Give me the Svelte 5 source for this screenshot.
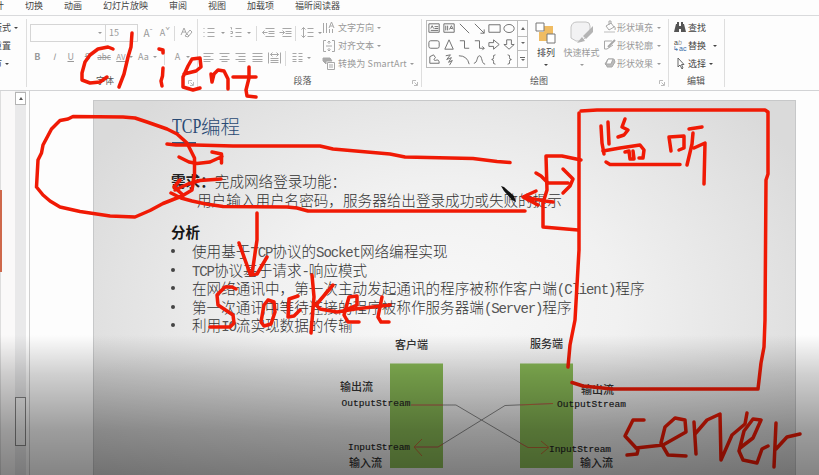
<script>
  const tabs = ['切换', '动画', '幻灯片放映', '审阅', '视图', '加载项', '福昕阅读器'];

  const points = [
    [['c', '使用基于'], ['l', 'TCP'], ['c', '协议的'], ['l', 'Socket'], ['c', '网络编程实现']],
    [['l', 'TCP'], ['c', '协议基于请求'], ['l', '-'], ['c', '响应模式']],
    [['c', '在网络通讯中，第一次主动发起通讯的程序被称作客户端'], ['l', '(Client)'], ['c', '程序']],
    [['c', '第一次通讯中等待连接的程序被称作服务器端'], ['l', '(Server)'], ['c', '程序']],
    [['c', '利用'], ['l', 'IO'], ['c', '流实现数据的传输']]
  ];

  const shapes = [
    'M2 3H13V12H2ZM8 6H12M8 8H12M4 10H12M4 8L5.5 5L7 8',
    'M2 3H13V12H2ZM4 5V10M6 5V10M8 9L10 5L12 9M9 8H11',
    'M3 3L13 13',
    'M3 3L13 13M13 9V13H9',
    'M2 4H14V12H2Z',
    'M2 8A5.5 4.3 0 1 1 13 8A5.5 4.3 0 1 1 2 8Z',
    'M4 4H11Q13 4 13 6V10Q13 12 11 12H4Q2 12 2 10V6Q2 4 4 4Z',
    'M7.5 3L12 13H3Z',
    'M3 4H8V12H13',
    'M3 4H8V12H13M11 10L13 12L11 14',
    'M2 6H7V3L13 8L7 13V10H2Z',
    'M5 3H10V8H13L7.5 13L2 8H5Z',
    'M3 5L7 3L9 6Q6 9 9 9Q13 7 13 12H3Z',
    'M4 4L9 3L5 8L10 6L7 11L11 9L8 14',
    'M2 4Q11 4 13 13',
    'M2 12C6 12 5 4 8 4S10 13 14 13',
    'M9 3Q6 3 7 6Q7 8 5 8Q7 8 7 10Q6 13 9 13',
    'M6 3Q9 3 8 6Q8 8 10 8Q8 8 8 10Q9 13 6 13'
  ];

  const paraTop = [
    ['M0 1H1M0 5H1M0 9H1M4 1H11M4 5H11M4 9H11', 11, 5],
    ['arrow', 10, 3],
    ['M0 0H1V2M0 4H2V6H0M0 9H2M5 1H11M5 5H11M5 9H11', 11, 4],
    ['arrow', 10, 3],
    ['sep', 1, 5],
    ['M3 1H12M6 4H12M6 6H12M3 9H12M5 5H0M2 3L0 5L2 7', 12, 5],
    ['M3 1H12M6 4H12M6 6H12M3 9H12M0 5H5M3 3L5 5L3 7', 12, 4],
    ['sep', 1, 5],
    ['M2 0V10M0 2L2 0L4 2M0 8L2 10L4 8M6 1H12M6 5H12M6 9H12', 12, 3],
    ['arrow', 8, 0]
  ];
  const paraBottom = [
    ['M0 1H10M0 4H7M0 7H10M0 9H7', 11, 5],
    ['M0 1H10M2 4H8M0 7H10M2 9H8', 11, 5],
    ['M0 1H10M3 4H10M0 7H10M3 9H10', 11, 6],
    ['M0 1H10M0 4H10M0 7H10M0 9H10', 11, 5],
    ['M0 0V11M12 0V11M2 2H10M4 0L2 2L4 4M8 0L10 2L8 4M2 6H10M2 8H10M2 10H10', 13, 4],
    ['sep', 1, 6],
    ['M0 1H4M0 4H4M0 7H4M0 9H4M6 1H10M6 4H10M6 7H10M6 9H10', 11, 2],
    ['arrow', 8, 0]
  ];

  const ink = [
    // client
    'M113 49L108 47L98 49L90 55L85 62L82 73L82 80L90 83L100 82L107 77',
    'M132 33L131 47L128 57L124 74L119 87',
    'M159 49L163 50L163 53',
    'M163 68L162.500 76L161 81L162 86',
    'M184 74L196 71L201 67L200 58L192 59L188 66L183 77L183 87L193 90L200 88',
    'M211 74L212 82L214 74L218 70L224 71L228 79L228 89',
    'M249 67L249 78L246 90L247 96L256 97M233 77H256',
    // client circle
    'M73 116.500L68 119L60 120.500L51.500 129L43 145L41.500 153L38 160L36.500 187L43 195L50 201L60 207L80 211.500L110 216L135 217L150 210.500L163 203.500L182 196L192 190L194.500 175V158L187 143L177 134L167 129L147 122L135 118L123 117Z',
    'M167 144L176 145H195L233 146H320L333 149L390 154L405 157L473 158.500L497 161.500L510 162.500',
    'M171 193L181 198L192 201L206 204L223 206.500L287 207L297 208L308 211H525',
    'M179 157L189 162L197 163.500L210 162L222 156.500M212 152L221.500 154V163',
    'M221 179L200 180.500L188 184L175 190M180 180L174 187L183 195',
    'M257 213L257 240L252 274M239 243L250.500 275L257 274L267 257',
    // socket
    'M236 289L232 287L225 287L217 295L218 305L233 315L234 323L230 327H210',
    'M268 300L264 305L261 322L264 326L271 324L275 312L274 302L268 300',
    'M298 296L289 299L288 317L294 316L300 310',
    'M312 275L314 297L311 333M333 285L316 305L320 309L337 312L355 309L390 305',
    'M345 310L357 305V296L349 297L344 315L348 322H359',
    'M382 297L378 317L381 322H389',
    // server box
    'M581 111L597 110H765L768 112V174L766 180L765 320L764 347L761 363L758 389H612L583 386L572 382.500',
    'M579 113L579 250L575 320L570 345L568 367',
    'M581 160L562 156H546L547 190L543 203V227L578 230',
    'M536 173L541 176L548 183H568M563 169L573 179L570 186L563 193',
    'M553 202L545 201L523 197M536 191L523 197L538 205',
    // listen
    'M601 126L602 143L604 154M608 122L609 144M625 119L622 127L628 130L624 135L618 137',
    'M603 151L620 148L640 145L644 150L643 158H639M625 152L629 151L630 159H634L633 151',
    'M606 162L610 164.500H680',
    'M669 137L671 151M669 137L684 136L684 148L679 150M702 127L689 129M693 133L692 144L687 165M694 148L705 143L704 184',
    // server
    'M644 420H633L625 436L638 450L637 454L627 455M636 448L663 445L686 432L685 420L675 418L665 427L661 443L668 455L686 456',
    'M694 422L696 454M695 434L707 420L720 414L721 460L732 435L745 424L747 413',
    'M740 448L753 438L761 420L753 419L744 431L739 451L743 460L757 463L762 449L768 446',
    'M776 423L774 467M776 449L787 437L800 434'
  ];
</script>

{#snippet strip(items)}
  {#each items as [d, w, gap]}
    {#if d === 'arrow'}
      <i class="cell" style:width="{w}px" style:margin-right="{gap}px"><b class="dd"></b></i>
    {:else if d === 'sep'}
      <i class="vsep" style:margin-right="{gap}px"></i>
    {:else}
      <svg class="line" width={w} height="12" viewBox="-.5 -.5 {w} 12" style:margin-right="{gap}px"><path {d} /></svg>
    {/if}
  {/each}
{/snippet}

<div class="app">
  <nav><span>计</span>{#each tabs as t}<span>{t}</span>{/each}</nav>

  <div class="ribbon">
    <section class="g0 dark">
      <div class="r">版式<b class="dd"></b></div>
      <div class="r">重置<b class="dd none"></b></div>
      <div class="r sec">节<b class="dd"></b></div>
    </section>

    <section class="font">
      <div class="row top">
        <div class="combo"><b class="dd"></b></div>
        <div class="size">15</div>
        <span class="cell big" style="width:20px">A<sup>ˆ</sup></span>
        <span class="cell mid" style="width:14px">A<sup>ˇ</sup></span>
        <i class="vsep" style="margin:0 6px 0 2px"></i>
        <svg class="line" width="12" height="12" viewBox="0 0 12 12"><path d="M0 8L3 1L6 8M1 5H5M4 9L9 3L11 5L7 10ZM6 7L8 9" /></svg>
      </div>
      <div class="row fmt">
        <span><b>B</b></span><span><em>I</em></span><span><u>U</u></span><span><s>S</s></span>
        <span class="sm"><s>abc</s></span><span class="av">AV</span><b class="dd"></b>
        <span class="aa">Aa</span><b class="dd"></b><i class="vsep"></i><span class="ac">A</span><b class="dd"></b>
      </div>
      <footer>字体</footer>
      <svg class="launch" viewBox="0 0 6 6"><path d="M.5 4V.5H4M2.500 2.500L5 5M5.500 2V5.500H2" /></svg>
    </section>

    <section class="para">
      <div class="two">
        <div class="icons">
          <div class="row top">{@render strip(paraTop)}</div>
          <div class="row second">{@render strip(paraBottom)}</div>
        </div>
        <div class="list">
          <div class="r"><svg class="line" width="12" height="12" viewBox="0 0 12 12"><path d="M.5 1V11M3.500 1V11M6.500 7V11M9.500 7V11M6 6L8.500 0L11 6M7 4H10" /></svg>文字方向<b class="dd"></b></div>
          <div class="r"><svg class="line" width="12" height="12" viewBox="0 0 12 12"><path d="M3 .5H.5V11.500H3M9 .5H11.500V11.500H9M6 1V4M4.500 2.500L6 1L7.500 2.500M3 6H9M6 11V8M4.500 9.500L6 11L7.500 9.500" /></svg>对齐文本<b class="dd"></b></div>
          <div class="r"><svg class="line" width="12" height="13" viewBox="0 0 12 13"><path fill="#aaa" d="M0 1H7L9 4H3V7L0 4Z" /><path d="M4.500 5.500H11.500V12.500H4.500ZM6 8H10M6 10H10" /></svg><span class="smart">转换为 SmartArt</span><b class="dd"></b></div>
        </div>
      </div>
      <footer>段落</footer>
      <svg class="launch" viewBox="0 0 6 6"><path d="M.5 4V.5H4M2.500 2.500L5 5M5.500 2V5.500H2" /></svg>
    </section>

    <section class="draw">
      <div class="two">
        <div class="gallery">
          <div class="shapes">
            {#each shapes as d}<svg viewBox="0 0 16 16"><path {d} /></svg>{/each}
          </div>
          <div class="scroll"><i><b class="dd up"></b></i><i><b class="dd"></b></i><i class="more"><b class="dd"></b></i></div>
        </div>
        <div class="tile dark arrange">
          <svg width="22" height="22" viewBox="0 0 22 22"><rect x="9" y="4" width="9" height="9" fill="#f0bc62" /><rect x="4" y="10" width="8" height="9" fill="#f0bc62" /><path d="M1 1H9V9H1ZM12 12H20V21H12Z" fill="#fff" stroke="#777" /></svg>
          <span>排列</span><b class="dd"></b>
        </div>
        <div class="tile quick">
          <svg width="24" height="24" viewBox="0 0 24 24"><path d="M7 1H16Q20 1 20 5V12L12 20H6L1 17V6Q2 1 7 1Z" fill="#f2f2f3" stroke="#c4c4c4" /><path d="M23 5L13 15L16 18L23 11ZM12 16L7 22L15 20Z" fill="#b4b4b4" /></svg>
          <span>快速样式</span><b class="dd"></b>
        </div>
        <div class="list">
          <div class="r"><svg class="line" width="13" height="13" viewBox="0 0 13 13"><path d="M2 5L7 2L10 6L5 9ZM5 4V0H7V3M10 5Q12 7 11 9" /><path d="M0 11H11" stroke="#ddd" stroke-width="2" /></svg>形状填充<b class="dd"></b></div>
          <div class="r"><svg class="line" width="13" height="13" viewBox="0 0 13 13"><path d="M8 2H.5V10H3L9 6" /><path d="M4 8L11 1" stroke-width="2" /></svg>形状轮廓<b class="dd"></b></div>
          <div class="r"><svg class="line" width="13" height="13" viewBox="0 0 13 13"><path d="M3 9L1 7L4 2H10L11 5L8 10H3Z" fill="#bbb" /><path d="M4 2H9L7 7H2Z" fill="#fff" /></svg>形状效果<b class="dd"></b></div>
        </div>
      </div>
      <footer>绘图</footer>
      <svg class="launch" viewBox="0 0 6 6"><path d="M.5 4V.5H4M2.500 2.500L5 5M5.500 2V5.500H2" /></svg>
    </section>

    <section class="edit dark">
      <div class="list">
        <div class="r"><svg width="12" height="12" viewBox="0 0 12 12"><path d="M2 2H5V4H7V2H10L12 10H7V7H5V10H0ZM3 0H5V2H3ZM7 0H9V2H7Z" fill="#555" /></svg>查找</div>
        <div class="r"><span class="rep"><span>a<i>b</i></span><span class="blue">↳ac</span></span>替换<b class="dd far"></b></div>
        <div class="r"><svg width="12" height="13" viewBox="0 0 12 13"><path d="M4 1V10L6 8L8 12L9 11L7.500 7.500H10Z" fill="#fff" stroke="#666" /></svg>选择<b class="dd"></b></div>
      </div>
      <footer>编辑</footer>
    </section>
  </div>

  <div class="work">
    <div class="thumbs"><i></i></div>
    <div class="bar"><div class="upbtn"><b class="dd up"></b></div><div class="thumb"></div></div>
    <div class="canvas">
      <main>
        <h1><span class="tl">TCP</span>编程</h1>
        <div class="rule"></div>
        <p class="need"><strong>需求：</strong>完成网络登录功能：</p>
        <p class="user">用户输入用户名密码，服务器给出登录成功或失败的提示</p>
        <h2>分析</h2>
        <ul>
          {#each points as p}
            <li>{#each p as [k, t]}<span class={k}>{t}</span>{/each}</li>
          {/each}
        </ul>
      </main>
    </div>
  </div>

  <svg class="over" viewBox="0 0 819 475">
    <g class="diagram">
      <rect x="390" y="363.500" width="53" height="104.500" />
      <rect x="520" y="363.500" width="53" height="104.500" />
      <path class="gray" d="M411 405H456L528 447.500H547M553 403.500L505 405.500L438 447H414" />
      <path class="brown" d="M411 405H443M520 443L528 447.500H548M541 441L549 447.500L541 454M553 403.500L520 405M443 444L438 447H414M422 439L414 447L422 456" />
      <g class="cn">
        <text x="395" y="349">客户端</text><text x="530" y="348">服务端</text>
        <text x="340" y="391">输出流</text><text x="349" y="467">输入流</text>
        <text x="581" y="394">输出流</text><text x="580" y="467">输入流</text>
      </g>
      <g class="en">
        <text x="341.500" y="406" textLength="69">OutputStream</text>
        <text x="348" y="449.500" textLength="62">InputStream</text>
        <text x="557" y="407" textLength="69">OutputStream</text>
        <text x="549" y="452" textLength="62">InputStream</text>
      </g>
    </g>
    <path d="M501 186L504 187L514 196L516 202L512 200L504 191Z" fill="#111" />
    <g class="ink">{#each ink as d}<path {d} />{/each}</g>
  </svg>
  <div class="shade"></div>
</div>

<style>
  :global(body) { margin: 0; overflow: hidden; }
  .app { position: relative; width: 819px; height: 475px; overflow: hidden; display: flex; flex-direction: column; background: #fdfdfd; color: #999; font: 9px/12px "Noto Sans CJK SC", sans-serif; white-space: nowrap; }
  .app * { box-sizing: border-box; }
  svg { display: block; flex: none; overflow: visible; }
  nav { height: 15px; flex: none; display: flex; gap: 21px; margin-left: -5px; color: #444; line-height: 11px; }
  .ribbon { height: 76px; flex: none; display: flex; border-top: 1px solid #d9dadc; border-bottom: 1px solid #d2d3d5; background: #fdfdfd; }
  section { position: relative; height: 68px; margin-top: 3px; border-right: 1px solid #dedede; flex: none; }
  .dark { color: #444; }
  .dd { display: block; flex: none; width: 0; height: 0; border: 2px solid transparent; border-top: 2.5px solid currentColor; border-bottom: 0; }
  .dd.up { border-top: 0; border-bottom: 3px solid currentColor; }
  .none { visibility: hidden; }
  .r { height: 18px; display: flex; align-items: center; gap: 3px; }
  .list, .g0 { padding-top: 0; }
  .list .r, .g0 .r { line-height: 10px; padding-bottom: 1px; }
  .g0 { width: 27px; display: flex; flex-direction: column; align-items: flex-end; padding: 0 8px 0 0; }
  .sec { margin-right: 9px; }
  .row { display: flex; align-items: center; }
  .top { height: 18px; margin-top: 5px; }
  .font { width: 171px; }
  .combo { width: 76px; height: 18px; border: 1px solid #d5d5d5; margin-left: 3px; display: flex; align-items: center; justify-content: flex-end; padding-right: 3px; }
  .size { width: 32px; height: 18px; border: 1px solid #d5d5d5; border-left: 0; padding: 2px 3px; font-size: 9px; }
  .cell { display: flex; justify-content: center; align-items: center; }
  .big { font-size: 10px; } .mid { font-size: 9px; }
  sup { font-size: 8px; line-height: 8px; align-self: flex-start; }
  .vsep { width: 1px; height: 15px; background: #dadada; flex: none; }
  .fmt { height: 18px; margin-top: 6px; padding-left: 2px; font-size: 9px; }
  .fmt span { width: 16.7px; text-align: center; flex: none; }
  .fmt .sm, .fmt .av { font-size: 8px; }
  .fmt .av { text-decoration: underline; width: 17px; }
  .fmt .aa { width: 20px; }
  .fmt .vsep { margin: 0 3px 0 7px; }
  .fmt .ac { width: 18px; }
  footer { position: absolute; left: 0; right: 14px; bottom: -1px; height: 14px; text-align: center; color: #555; line-height: 14px; }
  .line { fill: none; stroke: #a8a8a8; stroke-width: 1; }
  .launch { position: absolute; right: 3px; bottom: 1px; width: 6px; height: 6px; fill: none; stroke: #bbb; }
  .two { display: flex; }
  .para { width: 224px; }
  .icons { width: 125px; padding-left: 5px; }
  .second { height: 18px; margin-top: 7px; }
  .smart { letter-spacing: .15px; }
  .draw { width: 247px; }
  .gallery { display: flex; width: 102px; height: 48px; border: 1px solid #bcbcbc; margin: 1px 0 0 4px; flex: none; }
  .shapes { width: 90px; display: grid; grid-template-columns: repeat(6, 15px); grid-auto-rows: 15.5px; }
  .shapes svg { width: 15px; height: 15px; fill: none; stroke: #6c6c6c; }
  .scroll { width: 10px; border-left: 1px solid #bcbcbc; display: grid; color: #666; }
  .scroll i { display: flex; align-items: center; justify-content: center; }
  .scroll i + i { border-top: 1px solid #bcbcbc; }
  .more { flex-direction: column; }
  .more::before { content: ''; width: 5px; height: 1px; background: #666; margin-bottom: 1px; }
  .tile { display: flex; flex-direction: column; align-items: center; }
  .tile svg { height: 24px; margin: 2px 0 1px; }
  .tile span { height: 18px; line-height: 14px; }
  .arrange { width: 20px; margin-left: 8px; }
  .quick { width: 37px; margin: 0 4px 0 7px; }
  .draw .list .r { gap: 0; }
  .draw .list .dd { margin-left: 4px; }
  .draw footer { right: 12px; }
  .edit { width: 56px; }
  .edit .list { padding-left: 5px; }
  .edit .r { gap: 2px; }
  .edit .dd { margin-left: 1px; }
  .edit .far { margin-left: 5px; }
  .edit footer { right: 1px; }
  .rep { width: 12px; font: 7px/6px "Liberation Sans", sans-serif; display: flex; flex-direction: column; }
  .rep i { color: #999; } .blue { color: #3b6ca6; margin-left: -1px; }
  .work { flex: 1; display: flex; min-height: 0; }
  .thumbs { width: 15px; background: #faf9f9; border-left: 1px solid #ddd; padding-top: 99px; }
  .thumbs i { display: block; width: 2px; height: 82px; margin-left: -1px; background: #ce684b; }
  .bar { width: 11px; background: #e9e9ea; color: #555; }
  .upbtn { height: 13px; margin-top: 1px; border: 1px solid #b4b4b4; background: #fff; display: flex; align-items: center; justify-content: center; }
  .thumb { margin-top: 292px; height: 49px; border: 1px solid #888; background: #f8f8f8; }
  .canvas { flex: 1; margin-left: 3px; border-left: 1px solid #cfcfcf; padding: 9px 23px 0 63px; min-width: 0; }
  main { height: 390px; border: 1px solid #c7c8c9; border-bottom: 0; padding-left: 78px; background: radial-gradient(ellipse 410px 300px at 50% 54%, #f8f8f8 0%, #f1f1f1 42%, #e3e3e3 78%, #dadada 100%); color: #333; font-size: 14.6px; font-weight: 300; }
  h1 { margin: 13px 0 0; height: 24px; font-size: 19.500px; line-height: 24px; font-weight: 300; color: #294a74; display: flex; }
  .tl { font-family: "Liberation Serif", serif; font-size: 21px; width: 29px; transform: scaleX(.76); transform-origin: 0 50%; }
  .rule { width: 24px; height: 2px; background: #36577e; margin-top: 4px; }
  p { margin: 0; height: 18.500px; line-height: 18.500px; }
  .need { margin-top: 28px; margin-left: -1px; }
  strong { font-weight: 600; color: #222; }
  .user { padding-left: 25px; }
  h2 { margin: 14px 0 0; height: 18px; line-height: 18px; font-size: 14.5px; font-weight: 700; color: #161616; margin-left: -1px; }
  ul { list-style: none; margin: 1px 0 0; padding: 0; }
  li { height: 18.500px; line-height: 18.500px; padding-left: 20px; position: relative; }
  li::before { content: ''; position: absolute; width: 4px; height: 4px; border-radius: 50%; background: #444; left: -1px; top: 7px; }
  .l { font-family: "Liberation Mono", monospace; font-size: 14px; line-height: 1; letter-spacing: -1.100px; color: #555; }
  .over { position: absolute; inset: 0; width: 819px; height: 475px; }
  .diagram rect { fill: #8abb57; }
  .gray { fill: none; stroke: #888; }
  .brown { fill: none; stroke: #b56935; }
  .cn { font: 500 11px "Noto Sans CJK SC", sans-serif; fill: #333; }
  .en { font: 9.500px "Liberation Mono", monospace; fill: #222; stroke: #222; stroke-width: .15px; }
  .ink { fill: none; stroke: #f01a05; stroke-width: 3.5; stroke-linecap: round; stroke-linejoin: round; }
  .shade { position: absolute; left: 0; right: 0; bottom: 0; height: 140px; background: linear-gradient(rgba(0,0,0,0), rgba(0,0,0,.18) 28%, rgba(0,0,0,.38) 68%, rgba(0,0,0,.48)); }
</style>
